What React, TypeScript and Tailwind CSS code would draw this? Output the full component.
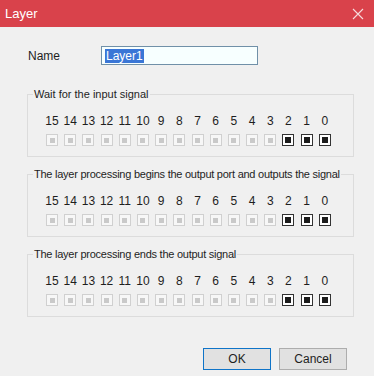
import React from "react"

const bits = [15, 14, 13, 12, 11, 10, 9, 8, 7, 6, 5, 4, 3, 2, 1, 0]

function Box({ on }: { on: boolean }) {
  return on ? (
    <div className="w-[12px] h-[12px] border border-[#333] bg-white flex items-center justify-center">
      <div className="w-[6px] h-[6px] bg-[#1c1c1c]" />
    </div>
  ) : (
    <div className="w-[12px] h-[12px] border border-[#d0d0d0] bg-[#f7f7f7] flex items-center justify-center">
      <div className="w-[5px] h-[5px] bg-[#c9c9c9]" />
    </div>
  )
}

function Group({ title, tight }: { title: string; tight?: boolean }) {
  return (
    <fieldset className="ml-[27px] w-[327px] border border-[#dcdcdc] pb-[10px] min-w-0">
      <legend
        className={
          "ml-[5px] px-[1px] text-[11px] leading-[16px] text-[#1e1e1e] whitespace-nowrap " +
          (tight ? "tracking-[-0.25px]" : "tracking-[0px]")
        }
      >
        {title}
      </legend>
      {/* bits */}
      <div className="ml-[18px] mt-[11px] flex gap-[6.2px]">
        {bits.map((b) => (
          <div key={b} className="flex flex-col items-center w-[12px]">
            <span className="text-[12px] leading-[16px] text-[#1e1e1e] whitespace-nowrap">{b}</span>
            <div className="mt-[5px]">
              <Box on={b <= 2} />
            </div>
          </div>
        ))}
      </div>
    </fieldset>
  )
}

export default function App() {
  return (
    <div className="w-[374px] h-[376px] bg-[#f0f0f0] overflow-hidden" style={{ fontFamily: '"Liberation Sans", Arial, sans-serif' }}>
      {/* Title bar */}
      <div className="h-[27px] bg-[#d9424b] flex items-center justify-between pl-[5px] pr-[10px]">
        <span className="text-white text-[13px]">Layer</span>
        <svg width="12" height="12" viewBox="0 0 12 12">
          <path d="M1 1L11 11M11 1L1 11" stroke="#f6dcdd" strokeWidth="1.1" />
        </svg>
      </div>

      {/* Name */}
      <div className="mt-[19px] flex items-center">
        <span className="ml-[28px] w-[73px] text-[12px] text-[#1e1e1e]">Name</span>
        <div className="w-[157px] h-[19px] border border-[#7090a8] bg-[#f7ffff] flex items-center pl-[3px]">
          <span className="bg-[#3a76d6] text-white text-[12px] leading-[14px] px-[1px]">Layer1</span>
        </div>
      </div>

      <div className="mt-[21px]">
        <Group title="Wait for the input signal" />
      </div>
      <div className="mt-[9px]">
        <Group title="The layer processing begins the output port and outputs the signal" tight />
      </div>
      <div className="mt-[9px]">
        <Group title="The layer processing ends the output signal" tight />
      </div>

      {/* Buttons */}
      <div className="mt-[31px] flex justify-end gap-[8px] pr-[27px]">
        <button className="w-[68px] h-[22px] bg-[#e1e1e1] border border-[#0f74c8] text-[12px] text-[#1e1e1e]">OK</button>
        <button className="w-[68px] h-[22px] bg-[#e1e1e1] border border-[#adadad] text-[12px] text-[#1e1e1e]">Cancel</button>
      </div>
    </div>
  )
}
